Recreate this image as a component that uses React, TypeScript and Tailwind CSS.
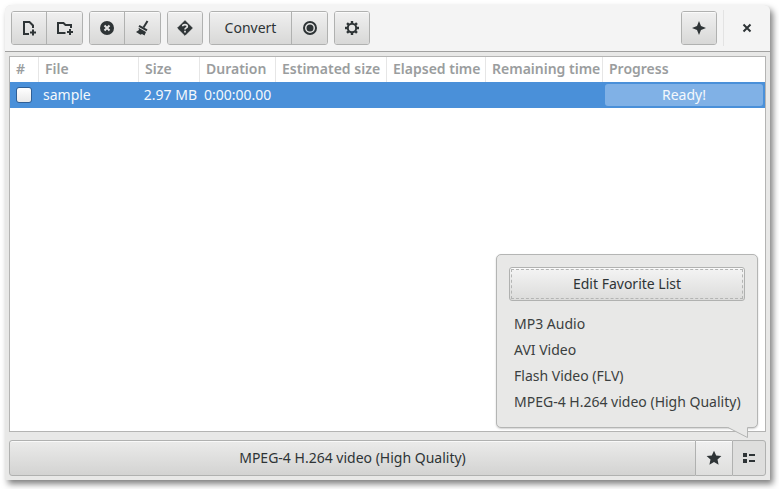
import type { ReactNode } from "react";

const surface =
  "flex items-center justify-center border-[#b0b1b0] bg-linear-to-b text-[#2e3436] shadow-[inset_0_1px_#ffffffb0]";

function Icon({ children }: { children: ReactNode }) {
  return (
    <svg width="16" height="16" viewBox="0 0 16 16" fill="none" stroke="currentColor" strokeWidth="2" aria-hidden="true">
      {children}
    </svg>
  );
}

function ToolGroup({ children }: { children: ReactNode }) {
  return (
    <div className="flex h-[34px] divide-x divide-[#b5b6b5] overflow-hidden rounded-[3px] border border-[#b0b1b0]">
      {children}
    </div>
  );
}

function ToolButton({ label, children }: { label: string; children: ReactNode }) {
  return (
    <button type="button" aria-label={label} className={`${surface} w-[35px] from-[#f0f0f0] to-[#d8d8d7] only:w-[34px]`}>
      {children}
    </button>
  );
}

const teeth = [0, 45, 90, 135, 180, 225, 270, 315];

const headers = ["#", "File", "Size", "Duration", "Estimated size", "Elapsed time", "Remaining time", "Progress"];

const favorites = ["MP3 Audio", "AVI Video", "Flash Video (FLV)", "MPEG-4 H.264 video (High Quality)"];

export default function App() {
  return (
    <div className="flex h-screen bg-white pt-[5px] pr-[9px] pb-[9px] pl-[5px] font-['Noto_Sans','Open_Sans',sans-serif] text-sm text-[#3b3f40]">
      <div className="flex min-w-0 flex-1 flex-col rounded-t-md bg-[#e8e8e7] shadow-[3px_4px_6px_#00000080]">
        <header className="flex h-[47px] shrink-0 items-center gap-1.5 rounded-t-md border-b border-[#a1a1a0] bg-[#f4f4f4] px-1.5">
          <ToolGroup>
            <ToolButton label="Add file">
              <Icon>
                <path d="M8 14H3V2h5.500L12 5.500V8" />
                <path d="M12 9.500v6M9 12.500h6" />
              </Icon>
            </ToolButton>
            <ToolButton label="Add folder">
              <Icon>
                <path d="M8.500 13H1V3h5.500l2 2H14v3" />
                <path d="M13 9v6M10 12h6" />
              </Icon>
            </ToolButton>
          </ToolGroup>
          <ToolGroup>
            <ToolButton label="Remove">
              <Icon>
                <circle cx="8" cy="8" r="7" fill="currentColor" stroke="none" />
                <path d="M5.500 5.500l5 5M10.500 5.500l-5 5" stroke="#e4e4e4" />
              </Icon>
            </ToolButton>
            <ToolButton label="Clear">
              <Icon>
                <path d="M12.500 1L8.500 7.500" />
                <path d="M4 5.800l8 4.600" />
                <path d="M3.500 7.800l7.500 4.200-1.500 3.500-2.500-1.500-1.500.8L1 12l3-2z" fill="currentColor" stroke="none" />
              </Icon>
            </ToolButton>
          </ToolGroup>
          <ToolGroup>
            <ToolButton label="Help">
              <Icon>
                <path d="M8 0.700L15.300 8 8 15.300 0.700 8z" fill="currentColor" strokeWidth="1" strokeLinejoin="round" />
                <path d="M5.700 6.200C5.700 4 10.300 4 10.300 6.400 10.300 8 8 7.800 8 9.600M8 10.800v1.800" stroke="#e4e4e4" strokeWidth="1.700" />
              </Icon>
            </ToolButton>
          </ToolGroup>
          <ToolGroup>
            <button type="button" className={`${surface} w-[82px] from-[#f0f0f0] to-[#d8d8d7]`}>
              Convert
            </button>
            <ToolButton label="Record">
              <Icon>
                <circle cx="8" cy="8" r="6" />
                <circle cx="8" cy="8" r="3.500" fill="currentColor" stroke="none" />
              </Icon>
            </ToolButton>
          </ToolGroup>
          <ToolGroup>
            <ToolButton label="Settings">
              <Icon>
                <circle cx="8" cy="8" r="4.200" />
                {teeth.map((a) => (
                  <path key={a} d="M8 1v2.500" strokeWidth="2.400" transform={`rotate(${a} 8 8)`} />
                ))}
              </Icon>
            </ToolButton>
          </ToolGroup>
          <div className="ml-auto flex items-center gap-1.5">
            <ToolGroup>
              <ToolButton label="Tools">
                <Icon>
                  <path d="M8 1L10 6 15 8 10 10 8 15 6 10 1 8 6 6z" fill="currentColor" stroke="none" />
                </Icon>
              </ToolButton>
            </ToolGroup>
            <div className="h-9 w-px bg-[#e3e3e3]" />
            <button type="button" aria-label="Close" className="flex h-[34px] w-[34px] items-center justify-center text-[#2e3436]">
              <Icon>
                <path d="M4.500 4.500l7 7M11.500 4.500l-7 7" />
              </Icon>
            </button>
          </div>
        </header>

        <div className="flex min-h-0 flex-1 flex-col gap-2 p-1">
          <main className="min-h-0 flex-1 overflow-hidden border border-[#b4b4b3] bg-white">
            <table className="w-full table-fixed border-separate border-spacing-0">
              <colgroup>
                <col className="w-[29px]" />
                <col className="w-[100px]" />
                <col className="w-[61px]" />
                <col className="w-[76px]" />
                <col className="w-[111px]" />
                <col className="w-[99px]" />
                <col className="w-[117px]" />
                <col />
              </colgroup>
              <thead>
                <tr className="text-[#9a9d9e]">
                  {headers.map((h) => (
                    <th
                      key={h}
                      scope="col"
                      className="h-[25px] border-r border-[#e6e6e6] p-0 pb-px pl-1.5 text-left font-semibold whitespace-nowrap last:border-r-0"
                    >
                      {h}
                    </th>
                  ))}
                </tr>
              </thead>
              <tbody>
                <tr className="h-[26px] bg-[#4a90d9] text-[#f4f8fc]">
                  <td className="p-0 pl-1.5">
                    <input
                      type="checkbox"
                      aria-label="Select sample"
                      className="block h-4 w-4 appearance-none rounded-[3px] border border-[#2f5f96] bg-linear-to-b from-white to-[#e9e9e9]"
                    />
                  </td>
                  <td className="p-0 pl-1">sample</td>
                  <td className="p-0 pr-[3px] text-right whitespace-nowrap">2.97 MB</td>
                  <td className="p-0 pl-1 whitespace-nowrap">0:00:00.00</td>
                  <td />
                  <td />
                  <td />
                  <td className="p-0 px-0.5">
                    <div className="h-[22px] rounded-[3px] bg-[#80b1e6] text-center leading-[22px]">Ready!</div>
                  </td>
                </tr>
              </tbody>
            </table>
          </main>

          <div className="flex h-9 shrink-0">
            <button type="button" className={`${surface} min-w-0 flex-1 rounded-l-[3px] border from-[#ebebea] to-[#d3d3d2]`}>
              MPEG-4 H.264 video (High Quality)
            </button>
            <button type="button" aria-label="Add to favorites" className={`${surface} w-9 border-y from-[#f0f0f0] to-[#dededd]`}>
              <Icon>
                <path d="M8 .7l2.200 4.800 5.200.5-3.900 3.500 1.100 5.300L8 12.100l-4.600 2.700 1.100-5.300L.6 6l5.200-.5z" fill="currentColor" stroke="none" />
              </Icon>
            </button>
            <div className="relative flex">
              <button
                type="button"
                aria-label="Favorites"
                aria-expanded="true"
                className="flex w-[34px] items-center justify-center rounded-r-[3px] border border-[#b0b1b0] bg-[#dededd] text-[#2e3436]"
              >
                <Icon>
                  <path d="M2 3h4v4H2zM2 9h4v4H2zM8 4h6v2H8zM8 10h6v2H8z" fill="currentColor" stroke="none" />
                </Icon>
              </button>
              <div className="absolute right-2 bottom-12 w-[262px] rounded-[5px] border border-[#b4b5b4] bg-[#e8e8e7] p-3 shadow-[0_1px_2px_#00000030]">
                <button type="button" className={`${surface} h-[34px] w-full rounded-[3px] border from-[#f4f4f4] to-[#dcdcdb] p-px`}>
                  <span className="flex h-full w-full items-center justify-center border border-dashed border-[#b4b5b4]">
                    Edit Favorite List
                  </span>
                </button>
                <ul className="mt-2.5">
                  {favorites.map((f) => (
                    <li key={f}>
                      <button type="button" className="block h-[26px] w-full pl-[5px] text-left whitespace-nowrap">
                        {f}
                      </button>
                    </li>
                  ))}
                </ul>
                <svg className="absolute right-2 -bottom-3" width="22" height="13" viewBox="0 0 22 13" aria-hidden="true">
                  <path d="M0 0L1 1.500L20.500 11.500V0z" fill="#e8e8e7" />
                  <path d="M1 1.500L20.500 11.500V1.500" fill="none" stroke="#b4b5b4" />
                </svg>
              </div>
            </div>
          </div>
        </div>
      </div>
    </div>
  );
}
